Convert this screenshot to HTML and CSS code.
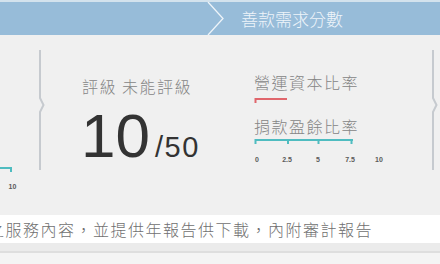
FILE: index.html
```html
<!DOCTYPE html>
<html lang="zh-Hant">
<head>
<meta charset="utf-8">
<link rel="stylesheet" href="styles.css">
</head>
<body>
<div class="page">
  <header class="steps">
    <div class="step-prev"></div>
    <svg class="step-chevron" width="18" height="33" viewBox="0 0 18 33"><polyline points="1,0 16,16.5 1,33" fill="none" stroke="#eef4f9" stroke-width="1.3"/></svg>
    <div class="step-title">善款需求分數</div>
  </header>
  <main class="panels">
    <div class="prev-chart">
      <svg width="38" height="26" viewBox="0 0 38 26">
        <line x1="0" y1="1" x2="12" y2="1" stroke="#4fbcc0" stroke-width="2"/>
        <line x1="11" y1="0" x2="11" y2="5" stroke="#4fbcc0" stroke-width="2"/>
        <text x="12.5" y="22" class="axis-label" text-anchor="middle">10</text>
      </svg>
    </div>
    <svg class="divider" width="8" height="122" viewBox="0 0 8 122"><path d="M2 0 V48 L5.5 55 L2 62 V120" fill="none" stroke="#c6cacf" stroke-width="2"/></svg>
    <section class="rating">
      <div class="rating-label">評級 未能評級</div>
      <div class="score"><span class="score-main">10</span><span class="score-max">/50</span></div>
    </section>
    <section class="ratios">
      <div class="ratio-label">營運資本比率</div>
      <svg class="bar-red" width="120" height="6" viewBox="0 0 120 6">
        <line x1="1" y1="1" x2="33" y2="1" stroke="#e0666c" stroke-width="2"/>
        <line x1="1.5" y1="0" x2="1.5" y2="5" stroke="#e0666c" stroke-width="2"/>
      </svg>
      <div class="ratio-label second">捐款盈餘比率</div>
      <svg class="bar-teal" width="140" height="28" viewBox="0 0 140 28">
        <line x1="1" y1="1" x2="99" y2="1" stroke="#4fbcc0" stroke-width="2"/>
        <line x1="1.5" y1="0" x2="1.5" y2="5" stroke="#4fbcc0" stroke-width="2"/>
        <line x1="34" y1="0" x2="34" y2="5" stroke="#4fbcc0" stroke-width="2"/>
        <line x1="64.5" y1="0" x2="64.5" y2="5" stroke="#4fbcc0" stroke-width="2"/>
        <line x1="97.5" y1="0" x2="97.5" y2="5" stroke="#4fbcc0" stroke-width="2"/>
        <text x="3" y="22.5" class="axis-label" text-anchor="middle">0</text>
        <text x="33" y="22.5" class="axis-label" text-anchor="middle">2.5</text>
        <text x="64" y="22.5" class="axis-label" text-anchor="middle">5</text>
        <text x="96" y="22.5" class="axis-label" text-anchor="middle">7.5</text>
        <text x="125" y="22.5" class="axis-label" text-anchor="middle">10</text>
      </svg>
    </section>
    <svg class="divider" width="8" height="122" viewBox="0 0 8 122"><path d="M2 0 V48 L5.5 55 L2 62 V120" fill="none" stroke="#c6cacf" stroke-width="2"/></svg>
  </main>
  <div class="note"><span class="note-text">之服務內容，並提供年報告供下載，內附審計報告</span></div>
  <div class="note-shadow"></div>
  <div class="rest"></div>
</div>
</body>
</html>
```
FILE: styles.css
```css
html, body {
  margin: 0;
  padding: 0;
}
body {
  width: 440px;
  height: 264px;
  overflow: hidden;
  background: #f3f3f3;
  font-family: "Noto Sans CJK TC", "Liberation Sans", sans-serif;
}
.page {
  width: 440px;
  display: flex;
  flex-direction: column;
}
.steps {
  height: 33px;
  border-top: 2px solid #d3e2ed;
  background: #97bcd9;
  display: flex;
  align-items: center;
}
.step-prev {
  width: 207px;
}
.step-chevron {
  display: block;
}
.step-title {
  margin-left: 16px;
  font-size: 17px;
  line-height: 20px;
  color: #eef4f9;
  font-weight: 300;
}
.panels {
  height: 180px;
  background: #f0f0f0;
  display: flex;
  align-items: flex-start;
}
.prev-chart {
  width: 38px;
  padding-top: 132px;
}
.prev-chart svg {
  display: block;
}
.axis-label {
  font-family: "Liberation Sans", sans-serif;
  font-size: 7px;
  font-weight: bold;
  fill: #5a5a5a;
}
.divider {
  display: block;
  margin-top: 15px;
  flex: none;
}
.rating {
  width: 158px;
  padding-left: 35px;
  padding-top: 41px;
}
.rating-label {
  padding-left: 1px;
  font-size: 16px;
  line-height: 20px;
  letter-spacing: 1.5px;
  color: #858585;
  font-weight: 300;
  white-space: nowrap;
}
.score {
  margin-top: 9px;
  display: flex;
  align-items: baseline;
  font-family: "Liberation Sans", sans-serif;
  color: #333;
  line-height: 1;
}
.score-main {
  font-size: 62px;
}
.score-max {
  font-size: 29px;
  margin-left: 5px;
  letter-spacing: 1.5px;
}
.ratios {
  width: 177px;
  padding-left: 15px;
  padding-top: 37px;
  display: flex;
  flex-direction: column;
}
.ratio-label {
  font-size: 16px;
  line-height: 20px;
  letter-spacing: 1.5px;
  color: #858585;
  font-weight: 300;
  white-space: nowrap;
}
.ratio-label.second {
  margin-top: 12px;
}
.bar-red {
  display: block;
  margin-top: 6px;
}
.bar-teal {
  display: block;
  margin-top: 3px;
}
.note {
  height: 28px;
  background: #fff;
  display: flex;
  align-items: center;
  overflow: hidden;
}
.note-text {
  margin-left: -12px;
  font-size: 16px;
  line-height: 20px;
  letter-spacing: 1.5px;
  color: #707070;
  font-weight: 300;
  white-space: nowrap;
}
.note-shadow {
  height: 8px;
  background: #ebebeb;
  border-bottom: 2px solid #dedede;
}
.rest {
  height: 11px;
  background: #f4f4f4;
}
```
